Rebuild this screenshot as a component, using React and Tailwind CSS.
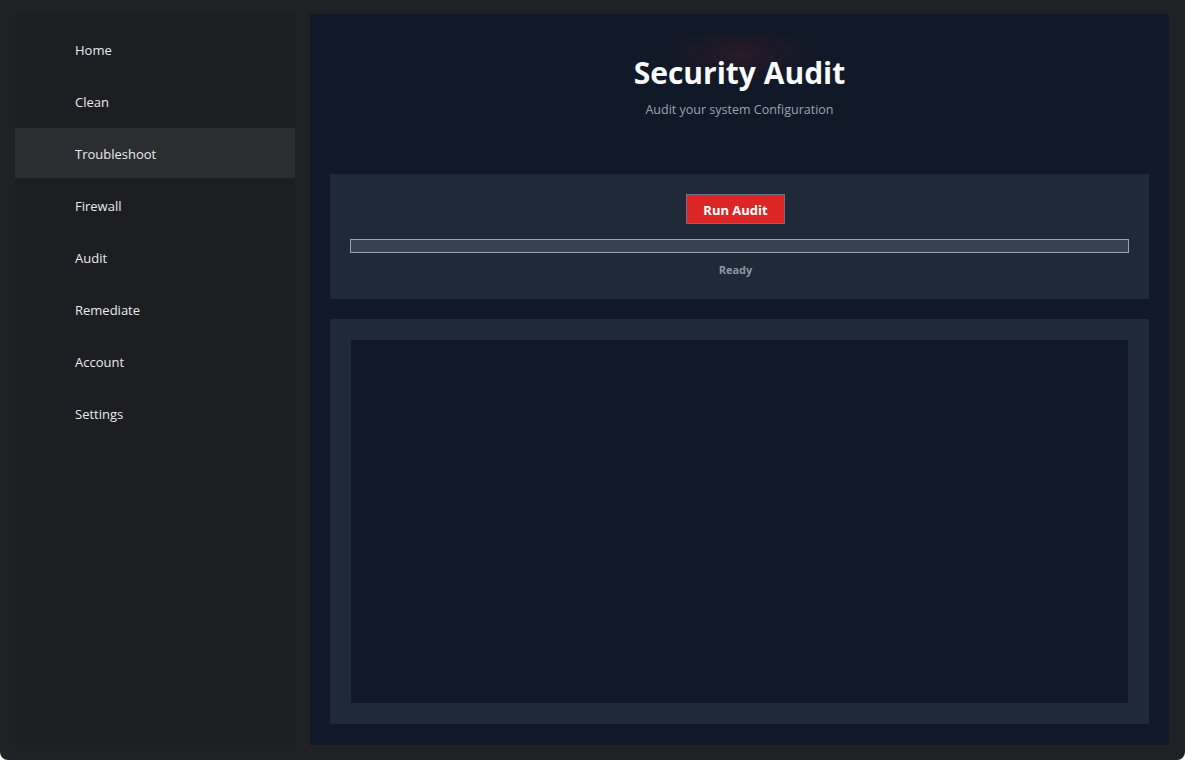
import React from "react";

const items = ["Home", "Clean", "Troubleshoot", "Firewall", "Audit", "Remediate", "Account", "Settings"];

export default function App() {
  return (
    <div
      className="w-[1185px] h-[760px] bg-[#202124] rounded-b-[8px] overflow-hidden flex pt-[14px] pl-[15px] pr-[16px] pb-[15px] gap-[15px]"
      style={{ fontFamily: '"Open Sans", "Noto Sans", sans-serif' }}
    >
      <aside className="w-[280px] h-full bg-[#1d1e21] pt-[10px] flex flex-col gap-[2px]">
        {items.map((it) => (
          <div
            key={it}
            className={`h-[50px] flex items-center pl-[60px] pt-[4px] text-[13px] text-[#e8eaed] ${
              it === "Troubleshoot" ? "bg-[#2c2d31]" : ""
            }`}
          >
            {it}
          </div>
        ))}
      </aside>
      <main className="flex-1 h-full bg-[#111827] relative flex flex-col px-[20px] pb-[21px]">
        <div
          className="absolute left-[350px] top-[20px] w-[160px] h-[50px] pointer-events-none"
          style={{ background: "radial-gradient(ellipse 50% 60% at 50% 40%, rgba(220,38,38,0.12) 0%, rgba(220,38,38,0.05) 50%, rgba(220,38,38,0) 100%)" }}
        />
        <div className="relative flex flex-col items-center pt-[40px] h-[160px]">
          <h1 className="text-[30px] leading-[38px] font-bold text-[#f9fafb]">Security Audit</h1>
          <p className="mt-[10px] text-[12.5px] leading-[16px] text-[#9ca3af]">Audit your system Configuration</p>
        </div>
        <section className="relative bg-[#1f2937] h-[125px] flex flex-col items-center px-[20px] pt-[20px]">
          <button className="h-[30px] w-[99px] mr-[8px] pt-[3px] bg-[#dc2626] border border-[#6b7280] text-white text-[13px] font-bold">
            Run Audit
          </button>
          <div className="w-full h-[14px] mt-[15px] bg-[#374151] border-[1.5px] border-[#94a3b8]" />
          <div className="mt-[9px] mr-[8px] text-[11px] font-bold text-[#8b95a5]">Ready</div>
        </section>
        <section className="relative mt-[20px] flex-1 bg-[#1f2937] p-[21px]">
          <div className="w-full h-full bg-[#111827]" />
        </section>
      </main>
    </div>
  );
}
